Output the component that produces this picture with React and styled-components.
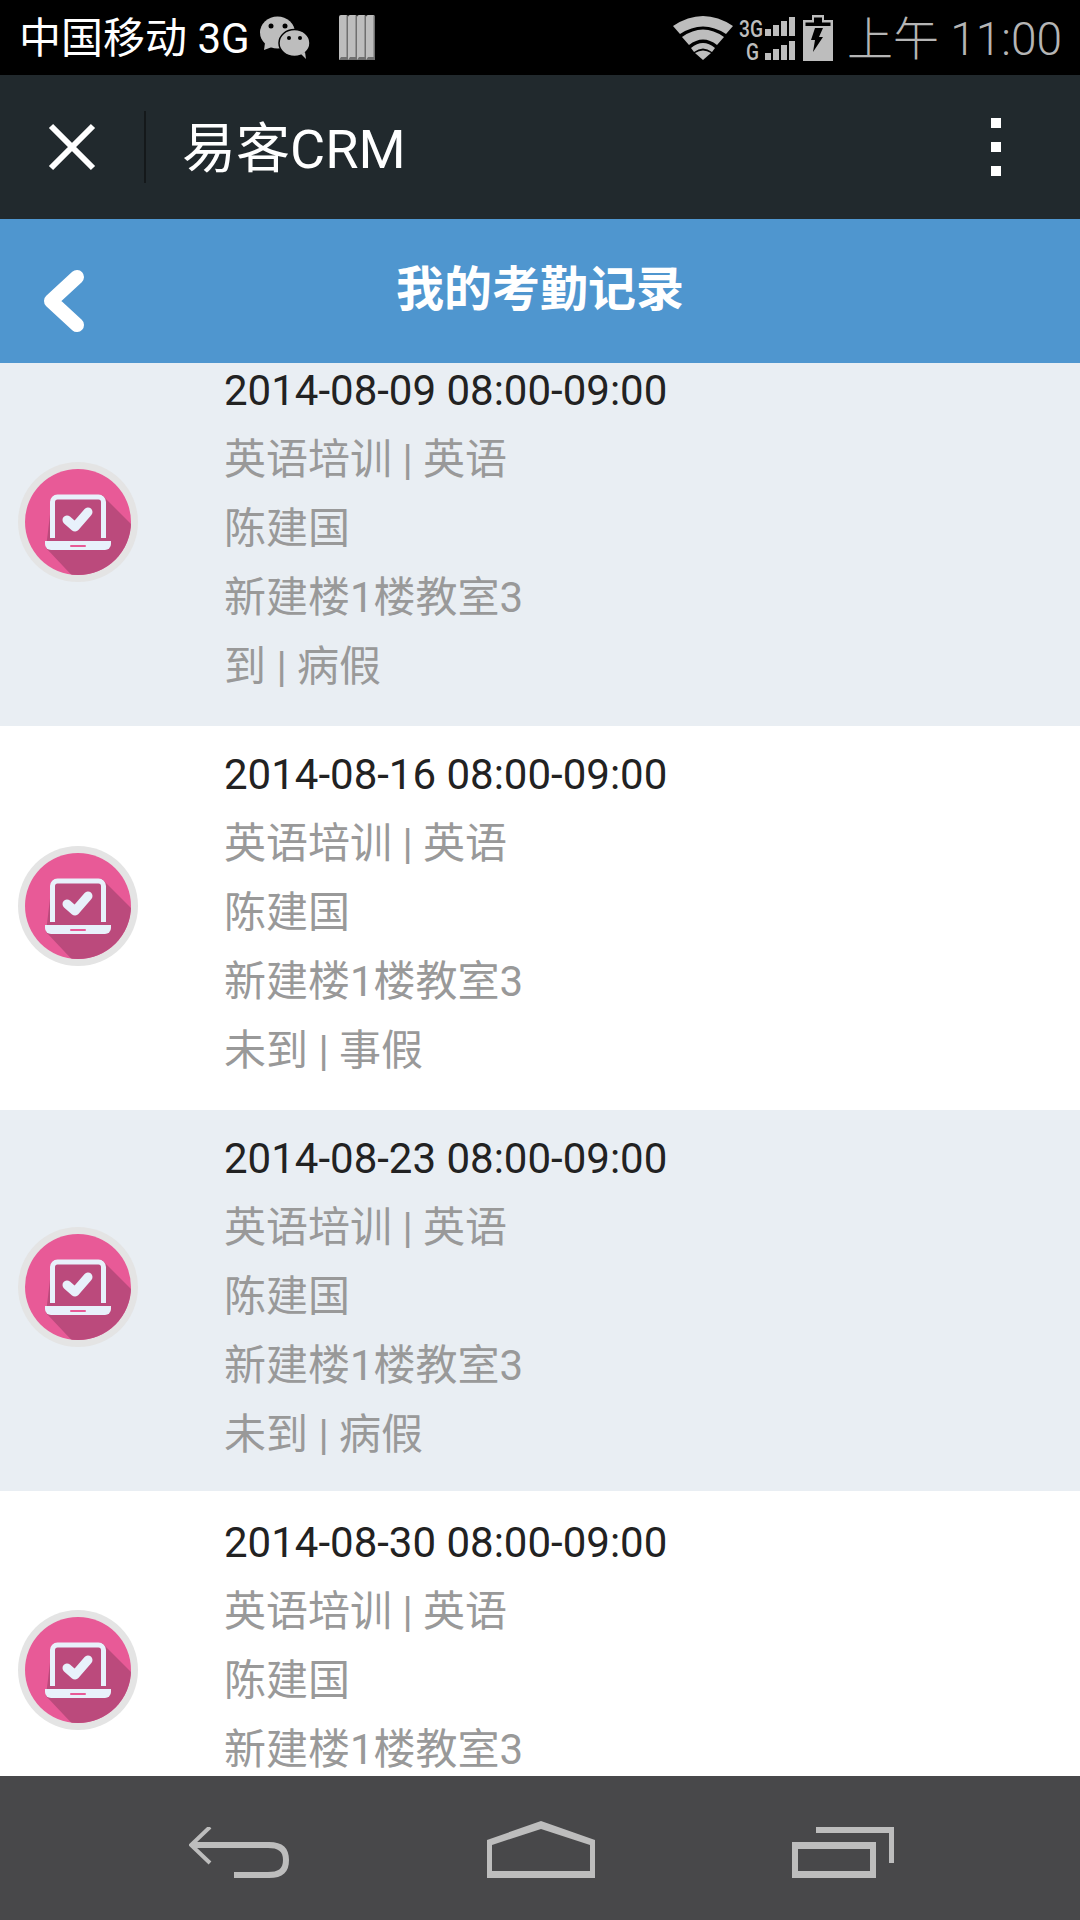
import React from "react";
import styled, { createGlobalStyle } from "styled-components";

const GlobalStyle = createGlobalStyle`
  html, body {
    margin: 0;
    padding: 0;
    background: #fff;
  }
  * {
    box-sizing: border-box;
  }
`;

const FONT = `Roboto, "Noto Sans CJK SC", sans-serif`;

const Screen = styled.div`
  width: 1080px;
  height: 1920px;
  display: flex;
  flex-direction: column;
  overflow: hidden;
  font-family: ${FONT};
`;

const StatusBar = styled.div`
  height: 75px;
  flex: 0 0 auto;
  background: #000;
  display: flex;
  align-items: center;
  padding: 0 18px 0 19px;
`;

const Carrier = styled.span`
  font-size: 42px;
  color: #fff;
  margin-bottom: 6px;
`;

const NoticeIcons = styled.div`
  display: flex;
  align-items: center;
  gap: 29px;
  margin-left: 10px;
`;

const StatusIcons = styled.div`
  margin-left: auto;
  display: flex;
  align-items: center;
  gap: 6px;
`;

const Clock = styled.span`
  font-size: 46px;
  font-weight: 300;
  color: #b5b5b5;
  margin: 0 0 6px 8px;
`;

const Toolbar = styled.div`
  height: 144px;
  flex: 0 0 auto;
  background: #21292d;
  display: flex;
  align-items: center;
  padding: 0 79px 0 48px;
`;

const Divider = styled.div`
  width: 2px;
  height: 72px;
  margin: 0 36px 0 48px;
  background: #14181a;
`;

const AppTitle = styled.span`
  font-size: 54px;
  color: #fff;
  margin-bottom: 6px;
`;

const Dots = styled.div`
  margin-left: auto;
  display: flex;
  flex-direction: column;
  gap: 14px;
`;

const Dot = styled.div`
  width: 10px;
  height: 10px;
  background: #fff;
`;

const Header = styled.div`
  height: 144px;
  flex: 0 0 auto;
  background: #4f96cf;
  display: flex;
  align-items: center;
  justify-content: center;
  padding-bottom: 12px;
  position: relative;
`;

const BackButton = styled.div`
  position: absolute;
  left: 42px;
  top: 50px;
  display: flex;
`;

const HeaderTitle = styled.h1`
  margin: 0;
  font-size: 48px;
  font-weight: 700;
  color: #fff;
`;

const List = styled.div`
  flex: 1 1 auto;
  min-height: 0;
  overflow: hidden;
`;

const Rows = styled.div`
  margin-top: -21px;
`;

const Row = styled.div`
  height: ${(p) => p.$height}px;
  background: ${(p) => (p.$alt ? "#e9eef3" : "#fff")};
  display: flex;
  align-items: flex-start;
  padding-left: 18px;
`;

const BadgeSlot = styled.div`
  display: flex;
  margin-top: ${(p) => p.$top}px;
`;

const Lines = styled.div`
  margin-left: 86px;
  padding-top: ${(p) => p.$top}px;
  display: flex;
  flex-direction: column;
`;

const DateLine = styled.div`
  font-size: 42px;
  line-height: 69px;
  color: #222;
`;

const InfoLine = styled.div`
  font-size: 42px;
  line-height: 69px;
  color: #999;
`;

const NavBar = styled.div`
  height: 144px;
  flex: 0 0 auto;
  background: #48484a;
  display: flex;
  align-items: flex-end;
  justify-content: space-between;
  padding: 0 186px 42px 189px;
`;

const Badge = () => (
  <svg width="120" height="120" viewBox="0 0 120 120">
    <defs>
      <clipPath id="badge-clip">
        <circle cx="60" cy="60" r="53" />
      </clipPath>
    </defs>
    <circle cx="60" cy="60" r="60" fill="#e4e4e4" />
    <circle cx="60" cy="60" r="53" fill="#e85a97" />
    <g clipPath="url(#badge-clip)">
      <polygon points="84,33 122,71 122,122 62,122 28,86 34,36" fill="#bb4a7c" />
    </g>
    <path
      d="M34.5 76V40a5 5 0 0 1 5-5h41a5 5 0 0 1 5 5v36"
      fill="none"
      stroke="#e8f1fb"
      strokeWidth="5"
    />
    <path d="M27 79h66v3a6 6 0 0 1-6 6H33a6 6 0 0 1-6-6z" fill="#e8f1fb" />
    <rect x="52" y="83" width="16" height="2" rx="1" fill="#e85a97" />
    <path
      d="M49 58l8 7 13-15"
      fill="none"
      stroke="#e8f1fb"
      strokeWidth="9"
      strokeLinecap="round"
      strokeLinejoin="round"
    />
  </svg>
);

const WeChatIcon = () => (
  <svg width="50" height="43" viewBox="0 0 50 43">
    <path d="M5 27L4 34l8-3z" fill="#bdbdbd" />
    <ellipse cx="17.500" cy="16.500" rx="17.500" ry="16" fill="#bdbdbd" />
    <circle cx="11" cy="10" r="2.500" fill="#000" />
    <circle cx="25" cy="10" r="2.500" fill="#000" />
    <ellipse cx="34.500" cy="27" rx="15.500" ry="13.500" fill="#bdbdbd" stroke="#000" strokeWidth="1.500" />
    <path d="M41 38l5 5-1-7z" fill="#bdbdbd" />
    <circle cx="29" cy="22" r="2" fill="#000" />
    <circle cx="40" cy="22" r="2" fill="#000" />
  </svg>
);

const BooksIcon = () => (
  <svg width="36" height="45" viewBox="0 0 36 45">
    {[0, 9, 18, 27].map((x) => (
      <g key={x}>
        <path d={`M${x} 2a2 2 0 0 1 2-2h5a2 2 0 0 1 2 2v43h-9z`} fill="#bdbdbd" />
        <rect x={x + 7.500} y="1" width="1.500" height="44" fill="#6f6f6f" />
        <path d={`M${x} 45l2-3h7v3z`} fill="#6f6f6f" />
      </g>
    ))}
  </svg>
);

const WifiIcon = () => (
  <svg width="60" height="44" viewBox="0 0 60 44">
    <path d="M0 10Q30-10 60 10l-7 8Q30 3 7 18z" fill="#bdbdbd" />
    <path d="M9 21Q30 6 51 21l-7 8Q30 18 16 29z" fill="#bdbdbd" />
    <path d="M18 32Q30 22 42 32l-3 4Q30 29 21 36z" fill="#bdbdbd" />
    <path d="M22 37Q30 32 38 37l-8 7z" fill="#bdbdbd" />
  </svg>
);

const SignalIcon = () => (
  <svg width="58" height="46" viewBox="0 0 58 46" overflow="visible">
    <text x="0" y="22" fontFamily="Roboto, sans-serif" fontSize="24" fontWeight="500" fill="#bdbdbd" textLength="24" lengthAdjust="spacingAndGlyphs">3G</text>
    <text x="7" y="45" fontFamily="Roboto, sans-serif" fontSize="24" fontWeight="500" fill="#bdbdbd" textLength="13" lengthAdjust="spacingAndGlyphs">G</text>
    {[
      [26, 14, 7],
      [34, 10, 11],
      [42, 6, 15],
      [50, 2, 19],
      [26, 38, 7],
      [34, 34, 11],
      [42, 30, 15],
      [50, 26, 19],
    ].map(([x, y, h]) => (
      <rect key={`${x}-${y}`} x={x} y={y} width="6" height={h} fill="#bdbdbd" />
    ))}
  </svg>
);

const BatteryIcon = () => (
  <svg width="30" height="46" viewBox="0 0 30 46">
    <path d="M0 5h9V0h12v5h9v41H0z" fill="#bdbdbd" />
    <path d="M2.500 7.500h25V11h-25zM11 2.500h8v5h-8z" fill="#000" />
    <path d="M12 13h8l-4 9h4L10 37l2-12H8z" fill="#000" />
  </svg>
);

const CloseIcon = () => (
  <svg width="48" height="48" viewBox="0 0 48 48">
    <path d="M3 3l42 42M45 3L3 45" stroke="#fff" strokeWidth="6" />
  </svg>
);

const BackChevron = () => (
  <svg width="44" height="64" viewBox="0 0 44 64">
    <path d="M35 8L9 32l26 24" fill="none" stroke="#fff" strokeWidth="14" strokeLinecap="round" strokeLinejoin="round" />
  </svg>
);

const NavBack = () => (
  <svg width="100" height="51" viewBox="0 0 100 51">
    <path d="M21 0L2 18l19 18" fill="none" stroke="#bdbdbd" strokeWidth="4" />
    <path d="M3 15h77c14 0 20 6 20 18s-6 18-20 18H45v-6h34c10 0 15-3 15-12s-5-12-15-12H3z" fill="#bdbdbd" />
  </svg>
);

const NavHome = () => (
  <svg width="108" height="57" viewBox="0 0 108 57">
    <path
      d="M54 0l54 19v38H0V19zM54 8L5 24v26h98V24z"
      fill="#bdbdbd"
      fillRule="evenodd"
    />
  </svg>
);

const NavRecent = () => (
  <svg width="102" height="51" viewBox="0 0 102 51">
    <path d="M24 0h78v36h-5V6H24z" fill="#bdbdbd" />
    <path d="M0 15h84v36H0zM6 22v22h72V22z" fill="#bdbdbd" fillRule="evenodd" />
  </svg>
);

const records = [
  { date: "2014-08-09", status: "到 | 病假", height: 384, badgeTop: 120, textTop: 14, alt: true },
  { date: "2014-08-16", status: "未到 | 事假", height: 384, badgeTop: 120, textTop: 14, alt: false },
  { date: "2014-08-23", status: "未到 | 病假", height: 381, badgeTop: 117, textTop: 14, alt: true },
  { date: "2014-08-30", status: "未到 | 事假", height: 384, badgeTop: 119, textTop: 17, alt: false },
];

const App = () => {
  return (
    <Screen>
      <GlobalStyle />
      <StatusBar>
        <Carrier>中国移动 3G</Carrier>
        <NoticeIcons>
          <WeChatIcon />
          <BooksIcon />
        </NoticeIcons>
        <StatusIcons>
          <WifiIcon />
          <SignalIcon />
          <BatteryIcon />
          <Clock>上午 11:00</Clock>
        </StatusIcons>
      </StatusBar>
      <Toolbar>
        <CloseIcon />
        <Divider />
        <AppTitle>易客CRM</AppTitle>
        <Dots>
          <Dot />
          <Dot />
          <Dot />
        </Dots>
      </Toolbar>
      <Header>
        <BackButton>
          <BackChevron />
        </BackButton>
        <HeaderTitle>我的考勤记录</HeaderTitle>
      </Header>
      <List>
        <Rows>
          {records.map((r) => (
            <Row key={r.date} $alt={r.alt} $height={r.height}>
              <BadgeSlot $top={r.badgeTop}>
                <Badge />
              </BadgeSlot>
              <Lines $top={r.textTop}>
                <DateLine>{r.date} 08:00-09:00</DateLine>
                <InfoLine>英语培训 | 英语</InfoLine>
                <InfoLine>陈建国</InfoLine>
                <InfoLine>新建楼1楼教室3</InfoLine>
                <InfoLine>{r.status}</InfoLine>
              </Lines>
            </Row>
          ))}
        </Rows>
      </List>
      <NavBar>
        <NavBack />
        <NavHome />
        <NavRecent />
      </NavBar>
    </Screen>
  );
};

export default App;
